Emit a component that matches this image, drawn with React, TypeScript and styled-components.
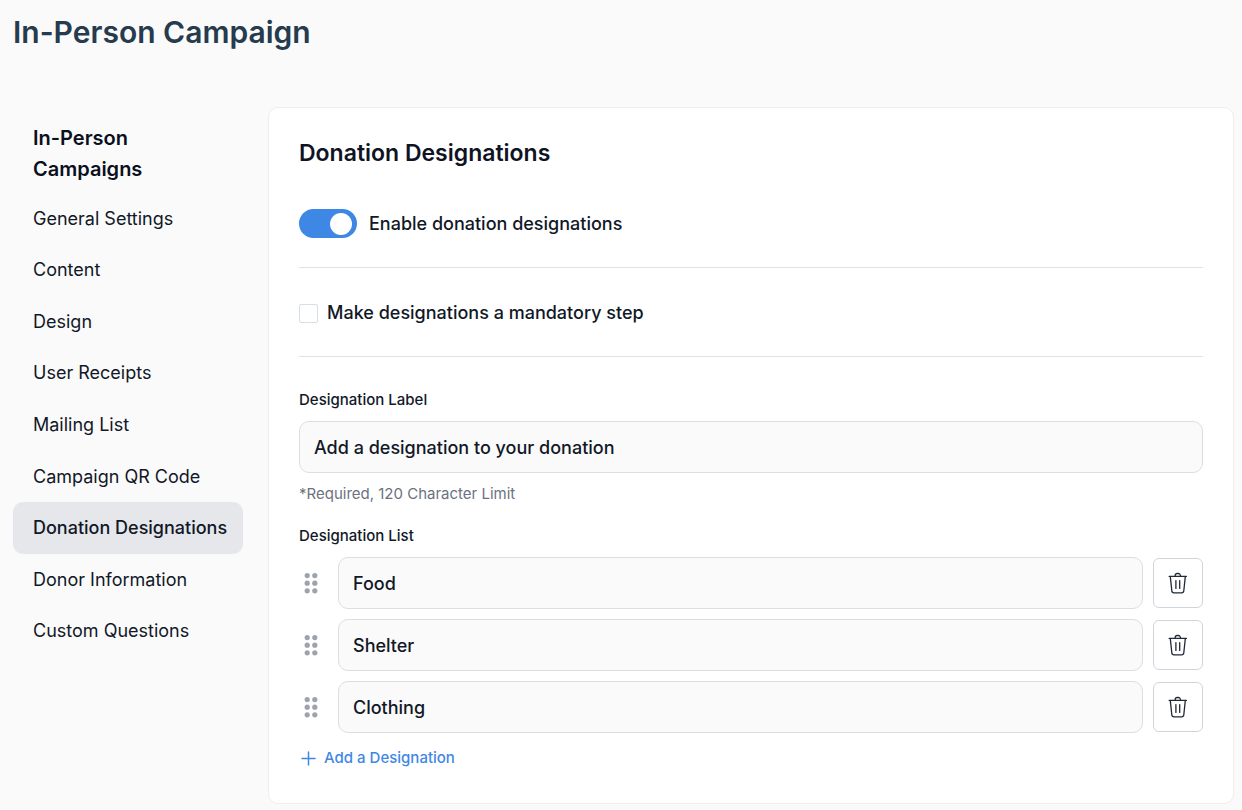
import React, { useState } from "react";
import styled, { createGlobalStyle, css } from "styled-components";

const GlobalStyle = createGlobalStyle`
  *, *::before, *::after { box-sizing: border-box; }
  body {
    margin: 0;
    background: #fafafa;
    color: #111827;
    font-family: Inter, "Liberation Sans", sans-serif;
    font-size: 18px;
    line-height: 28px;
  }
  button, input { font: inherit; color: inherit; }
`;

const Page = styled.div`
  padding: 8px 8px 6px 13px;
`;

const PageTitle = styled.h1`
  margin: 0 0 51px;
  font-size: 30px;
  font-weight: 600;
  line-height: 48px;
  color: #263b4d;
`;

const Columns = styled.div`
  display: grid;
  grid-template-columns: 230px minmax(0, 1fr);
  gap: 25px;
  align-items: start;
`;

const Sidebar = styled.nav`
  padding-top: 16px;
`;

const SidebarTitle = styled.h2`
  margin: 0 0 8px;
  padding: 0 60px 0 20px;
  font-size: 20px;
  font-weight: 600;
  line-height: 31px;
  color: #0b1020;
`;

const NavList = styled.ul`
  display: grid;
  grid-template-columns: minmax(0, 1fr);
  grid-auto-rows: 1fr;
  min-height: 464px;
  margin: 0;
  padding: 0;
  list-style: none;
`;

const NavLink = styled.a<{ $active: boolean }>`
  display: flex;
  align-items: center;
  height: 100%;
  padding: 0 12px 0 20px;
  border-radius: 10px;
  color: #111827;
  text-decoration: none;
  white-space: nowrap;
  ${({ $active }) =>
    $active &&
    css`
      background: #e5e7eb;
      font-weight: 500;
    `}
`;

const Card = styled.main`
  padding: 30px 30px 31px;
  background: #ffffff;
  border: 1px solid #eeeeef;
  border-radius: 10px;
`;

const CardTitle = styled.h2`
  margin: 0 0 41px;
  font-size: 23px;
  font-weight: 600;
  line-height: 30px;
  color: #0f1424;
`;

const Option = styled.div<{ $gap: number }>`
  display: flex;
  align-items: center;
  gap: ${({ $gap }) => $gap}px;
  font-weight: 500;
`;

const Switch = styled.input`
  appearance: none;
  flex: none;
  display: flex;
  align-items: center;
  width: 58px;
  height: 29px;
  margin: 0;
  padding: 0 5px;
  border-radius: 15px;
  background: #cbd2dc;
  cursor: pointer;

  &::before {
    content: "";
    width: 22px;
    height: 22px;
    border-radius: 50%;
    background: #ffffff;
  }

  &:checked {
    justify-content: flex-end;
    background: #3f87e5;
  }
`;

const Checkbox = styled.input`
  appearance: none;
  flex: none;
  width: 19px;
  height: 19px;
  margin: 0;
  border: 1px solid #d5dfe6;
  border-radius: 2px;
  background: #ffffff;
  cursor: pointer;

  &:checked {
    border-color: #3f87e5;
    background: #3f87e5;
  }
`;

const Divider = styled.hr`
  height: 1px;
  margin: 29px 0 31px;
  border: 0;
  background: #dde3e8;
`;

const FieldLabel = styled.label`
  display: block;
  margin-bottom: 9px;
  padding: 0;
  font-size: 15px;
  font-weight: 500;
  line-height: 24px;
`;

const TextInput = styled.input`
  display: block;
  flex: 1;
  width: 100%;
  min-width: 0;
  height: 52px;
  padding: 0 14px;
  border: 1px solid #dddee0;
  border-radius: 10px;
  background: #fafafa;
  font-weight: 500;
  color: #111827;
`;

const Hint = styled.p`
  margin: 9px 0 18px;
  font-size: 15px;
  line-height: 24px;
  color: #6b7280;
`;

const Group = styled.fieldset`
  margin: 0;
  padding: 0;
  border: 0;
`;

const Rows = styled.ul`
  display: flex;
  flex-direction: column;
  gap: 10px;
  margin: 0;
  padding: 0;
  list-style: none;
`;

const Row = styled.li`
  display: flex;
  align-items: center;
  gap: 10px;
`;

const DragHandle = styled.button`
  display: flex;
  flex: none;
  align-items: center;
  justify-content: center;
  width: 29px;
  height: 40px;
  padding: 0 5px 0 0;
  border: 0;
  background: none;
  cursor: grab;
`;

const DeleteButton = styled.button`
  display: flex;
  flex: none;
  align-items: center;
  justify-content: center;
  width: 50px;
  height: 50px;
  padding: 0;
  border: 1px solid #d1d5db;
  border-radius: 6px;
  background: #ffffff;
  cursor: pointer;
`;

const AddButton = styled.button`
  display: flex;
  align-items: center;
  gap: 8px;
  margin-top: 11px;
  padding: 0 0 0 2px;
  border: 0;
  background: none;
  font-size: 15px;
  font-weight: 500;
  color: #3f87e5;
  cursor: pointer;
`;

const GripIcon = () => (
  <svg width="14" height="22" viewBox="0 0 14 22" fill="#9ca3af" aria-hidden="true">
    {[3.6, 11.2, 18.8].map((y) => (
      <React.Fragment key={y}>
        <circle cx="3.2" cy={y} r="2.6" />
        <circle cx="10.8" cy={y} r="2.6" />
      </React.Fragment>
    ))}
  </svg>
);

const TrashIcon = () => (
  <svg
    width="20"
    height="22"
    viewBox="0 0 20 22"
    fill="none"
    stroke="#1f2937"
    strokeWidth="1.3"
    strokeLinecap="round"
    strokeLinejoin="round"
    aria-hidden="true"
  >
    <path d="M1.2 4.4H18.4" />
    <path d="M7.2 4.2V3.6A2.1 2.1 0 0 1 9.3 1.5H10.3A2.1 2.1 0 0 1 12.4 3.6V4.2" />
    <path d="M2.3 4.6L3.8 18.8A2.2 2.2 0 0 0 6 20.8H13.6A2.2 2.2 0 0 0 15.8 18.8L17.3 4.6" />
    <path d="M7.9 8.6V16.4M11.7 8.6V16.4" />
  </svg>
);

const PlusIcon = () => (
  <svg
    width="15"
    height="15"
    viewBox="0 0 15 15"
    fill="none"
    stroke="currentColor"
    strokeWidth="1.5"
    strokeLinecap="round"
    aria-hidden="true"
  >
    <path d="M7.5 1V14M1 7.5H14" />
  </svg>
);

const sections = [
  "General Settings",
  "Content",
  "Design",
  "User Receipts",
  "Mailing List",
  "Campaign QR Code",
  "Donation Designations",
  "Donor Information",
  "Custom Questions",
];

export default function App() {
  const [active, setActive] = useState("Donation Designations");
  const [items, setItems] = useState(["Food", "Shelter", "Clothing"]);

  const update = (index: number, value: string) =>
    setItems(items.map((item, i) => (i === index ? value : item)));

  return (
    <>
      <GlobalStyle />
      <Page>
        <PageTitle>In-Person Campaign</PageTitle>
        <Columns>
          <Sidebar>
            <SidebarTitle>In-Person Campaigns</SidebarTitle>
            <NavList>
              {sections.map((section) => (
                <li key={section}>
                  <NavLink
                    href="#"
                    $active={section === active}
                    aria-current={section === active ? "page" : undefined}
                    onClick={() => setActive(section)}
                  >
                    {section}
                  </NavLink>
                </li>
              ))}
            </NavList>
          </Sidebar>
          <Card>
            <CardTitle>Donation Designations</CardTitle>
            <Option $gap={12}>
              <Switch id="enable" type="checkbox" role="switch" defaultChecked />
              <label htmlFor="enable">Enable donation designations</label>
            </Option>
            <Divider />
            <Option $gap={9}>
              <Checkbox id="mandatory" type="checkbox" />
              <label htmlFor="mandatory">Make designations a mandatory step</label>
            </Option>
            <Divider />
            <FieldLabel htmlFor="label">Designation Label</FieldLabel>
            <TextInput
              id="label"
              maxLength={120}
              defaultValue="Add a designation to your donation"
            />
            <Hint>*Required, 120 Character Limit</Hint>
            <Group>
              <FieldLabel as="legend">Designation List</FieldLabel>
              <Rows>
                {items.map((item, index) => (
                  <Row key={index}>
                    <DragHandle type="button" aria-label="Reorder designation">
                      <GripIcon />
                    </DragHandle>
                    <TextInput
                      aria-label={`Designation ${index + 1}`}
                      value={item}
                      onChange={(event) => update(index, event.target.value)}
                    />
                    <DeleteButton
                      type="button"
                      aria-label="Delete designation"
                      onClick={() => setItems(items.filter((_, i) => i !== index))}
                    >
                      <TrashIcon />
                    </DeleteButton>
                  </Row>
                ))}
              </Rows>
            </Group>
            <AddButton type="button" onClick={() => setItems([...items, ""])}>
              <PlusIcon />
              Add a Designation
            </AddButton>
          </Card>
        </Columns>
      </Page>
    </>
  );
}
